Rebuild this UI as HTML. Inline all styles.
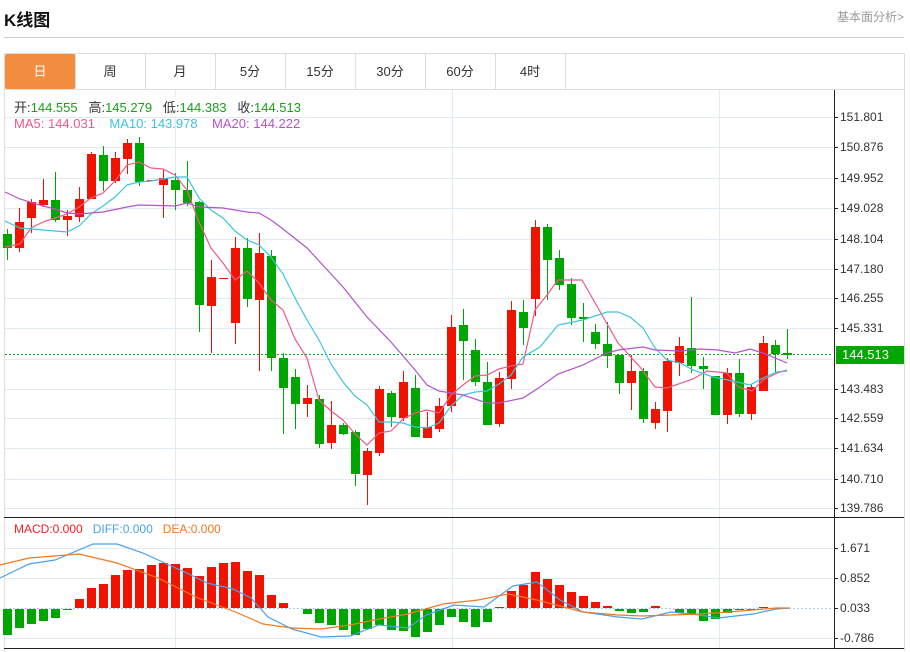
<!DOCTYPE html>
<html><head><meta charset="utf-8"><style>
body{margin:0;width:910px;height:652px;background:#fff;overflow:hidden;font-family:"Liberation Sans","Noto Sans CJK SC",sans-serif;position:relative}
.a{position:absolute;white-space:nowrap}
.tab{position:absolute;top:54px;height:35px;width:70px;line-height:35px;text-align:center;font-size:13px;color:#333;border-right:1px solid #ddd}
</style></head><body>
<div class="a" style="left:4px;top:6px;font-size:17px;font-weight:bold;color:#111">K线图</div>
<div class="a" style="right:6px;top:8px;font-size:12px;color:#999">基本面分析&gt;</div>
<div class="a" style="left:4px;top:37px;width:900px;height:1px;background:#ccc"></div>
<div class="a" style="left:4px;top:53px;width:899px;height:597px;border:1px solid #ddd;border-bottom:none"></div>
<div class="a" style="left:5px;top:89px;width:899px;height:1px;background:#ddd"></div>
<div class="tab" style="left:5px;background:#f28c3f;color:#fff;border-radius:2px">日</div>
<div class="tab" style="left:75px">周</div>
<div class="tab" style="left:145px">月</div>
<div class="tab" style="left:215px">5分</div>
<div class="tab" style="left:285px">15分</div>
<div class="tab" style="left:355px">30分</div>
<div class="tab" style="left:425px">60分</div>
<div class="tab" style="left:495px">4时</div>
<svg id="s" class="a" style="left:0;top:0" width="910" height="652" xmlns="http://www.w3.org/2000/svg" font-family="Liberation Sans, sans-serif" font-size="12"></svg>
<div class="a" style="left:14px;top:97px;font-size:13px;color:#333;background:#fff">开:<span style="color:#1a9e1a">144.555</span>&nbsp;&nbsp; 高:<span style="color:#1a9e1a">145.279</span>&nbsp;&nbsp; 低:<span style="color:#1a9e1a">144.383</span>&nbsp;&nbsp; 收:<span style="color:#1a9e1a">144.513</span></div>
<div class="a" style="left:14px;top:116px;font-size:13px"><span style="color:#ee5a8a">MA5: 144.031</span>&nbsp;&nbsp;&nbsp; <span style="color:#3cc4dc">MA10: 143.978</span>&nbsp;&nbsp;&nbsp; <span style="color:#b355c8">MA20: 144.222</span></div>
<div class="a" style="left:14px;top:522px;font-size:12px"><span style="color:#ee2222">MACD:0.000</span>&nbsp;&nbsp; <span style="color:#4aa0ee">DIFF:0.000</span>&nbsp;&nbsp; <span style="color:#f07820">DEA:0.000</span></div>
<div class="a" style="left:836px;top:346px;width:68px;height:18px;background:#00a800;color:#fff;font-size:13px;line-height:18px;padding-left:6px;box-sizing:border-box">144.513</div>
<script>
var s=document.getElementById('s'),h='';
function L(x1,y1,x2,y2,c,w,d){h+='<line x1="'+x1+'" y1="'+y1+'" x2="'+x2+'" y2="'+y2+'" stroke="'+c+'" stroke-width="'+(w||1)+'"'+(d?' stroke-dasharray="'+d+'"':'')+'/>';}
function R(x,y,w,hh,c){if(hh<1)hh=1;h+='<rect x="'+x+'" y="'+y+'" width="'+w+'" height="'+hh+'" fill="'+c+'"/>';}
var G='#e3ebf2';
var py=[117,147,178,208,239,269,298,328,359,389,418,448,479,508];
py.forEach(function(y){L(5,y+.5,833,y+.5,G);});
[548,578,638].forEach(function(y){L(5,y+.5,833,y+.5,G);});
[175,452,719].forEach(function(x){L(x+.5,90,x+.5,648,G);});
L(5,608.5,833,608.5,'#a8d0e8',1,'2,2');
L(5,354.5,833,354.5,'#1a9e1a',1,'2,2');
L(4,517.5,904,517.5,'#222');L(4,648.5,904,648.5,'#222');
L(834.5,90,834.5,648,'#222');
var lab=['151.801','150.876','149.952','149.028','148.104','147.180','146.255','145.331','','143.483','142.559','141.634','140.710','139.786'];
py.forEach(function(y,i){if(!lab[i])return;L(834,y+.5,838,y+.5,'#222');h+='<text x="840" y="'+(y+4)+'" fill="#333">'+lab[i]+'</text>';});
[[548,'1.671'],[578,'0.852'],[608,'0.033'],[638,'-0.786']].forEach(function(a){L(834,a[0]+.5,838,a[0]+.5,'#222');h+='<text x="840" y="'+(a[0]+4)+'" fill="#333">'+a[1]+'</text>';});
var RED='#f01400',GRN='#00a600';
// c: color, bodyTop, bodyBot, hi, lo
var C=[['g',234,248,229,260],['r',222,248,208,252],['r',202,218,199,233],['r',200,205,179,207],['g',200,220,172,222],['r',216,220,210,236],['r',199,217,187,222],['r',154,199,152,199],['g',155,181,146,191],['r',158,181,152,183],['r',143,159,139,174],['g',143,182,137,186],['r',180,181,180,181],['r',178,185,170,218],['g',180,190,173,210],['g',190,203,161,206],['g',202,305,201,332],['r',277,306,260,353],['r',278,279,278,279],['r',248,323,237,344],['g',248,299,238,307],['r',253,300,233,371],['g',256,358,250,371],['g',358,388,353,434],['g',377,404,369,429],['r',398,404,385,417],['g',399,444,395,448],['r',425,443,401,449],['g',425,434,423,435],['g',432,474,430,486],['r',451,475,448,505],['r',389,453,386,456],['g',393,417,391,427],['r',382,418,371,421],['g',388,437,375,437],['r',427,438,412,438],['r',406,429,398,432],['r',327,406,315,412],['g',325,341,309,380],['g',350,382,339,386],['g',382,425,362,425],['r',378,424,372,427],['r',310,379,301,389],['g',312,328,300,345],['r',227,299,220,316],['g',227,260,224,300],['g',258,285,250,290],['g',284,318,278,325],['g',317,319,303,342],['g',332,344,324,349],['g',344,356,322,368],['g',355,383,355,394],['r',371,383,355,410],['g',371,419,368,423],['r',409,423,402,429],['r',361,411,358,432],['r',346,363,337,376],['g',348,366,297,373],['g',366,369,357,389],['g',376,415,376,415],['r',373,415,368,424],['g',373,414,359,417],['r',387,414,384,420],['r',343,391,336,391],['g',345,354,340,372],['g',353,355,329,359]];
C.forEach(function(c,i){var x=7.5+12*i,col=c[0]=='r'?RED:GRN;L(x,c[3],x,c[4],col);R(x-4.5,c[1],9,c[2]-c[1],col);});
function P(pts,c){h+='<polyline fill="none" stroke="'+c+'" stroke-width="1.2" points="'+pts+'"/>';}
P('5,247 20,244 31,228 43,222 55,218 67,214 79,207 91,198 103,193 115,181 127,165 139,162 151,168 163,169 175,175 187,190 199,222 211,248 223,263 235,280 247,271 259,283 271,300 283,310 295,339 307,358 319,400 331,411 343,420 355,434 367,445 379,433 391,431 403,419 415,413 427,410 439,413 451,395 463,385 475,376 487,375 499,369 511,366 523,364 535,310 547,295 558,280 582,280 618,343 640,367 655,387 667,388 693,379 707,371 727,373 738,387 752,391 763,380 777,373 787,370','#ee5a8a');
P('5,221 20,228 43,230 55,231 67,232 79,226 91,214 103,206 115,197 127,185 139,182 151,181 163,179 175,177 187,177 199,198 211,210 223,218 235,231 247,240 259,245 271,257 283,274 295,298 307,320 319,340 331,364 343,382 355,396 367,405 379,422 391,422 403,423 415,427 427,428 439,423 451,406 463,395 475,392 487,391 499,384 511,375 523,357 540,347 558,325 583,320 607,312 618,312 630,317 643,328 655,348 667,360 680,363 693,370 713,377 737,382 750,385 763,378 777,372 787,371','#3cc4dc');
P('5,192 20,199 43,206 55,209 67,213 79,214 103,212 127,207 139,205 175,206 187,203 199,207 223,208 247,212 259,213 271,220 283,229 307,248 343,287 367,317 391,342 415,370 427,385 439,391 463,395 487,403 499,403 523,398 540,387 558,374 583,365 607,353 618,350 643,347 655,350 680,351 700,349 718,350 735,353 750,349 763,353 787,363','#b355c8');
var M=[635,628,624,621,618,610,599,588,584,575,570,569,565,563,564,568,576,567,563,562,571,575,595,603,608,614,623,625,630,635,629,625,630,631,637,632,625,617,622,627,622,607,591,585,572,579,585,592,596,602,606,611,613,612,606,608,613,615,621,619,613,610,609,607,608,608];
M.forEach(function(y,i){var x=7.5+12*i;if(y<608)R(x-4.5,y,9,608-y,RED);else if(y>608)R(x-4.5,609,9,y-609,GRN);});
P('0,578 29,564 55,560 93,544 117,544 143,553 169,565 187,573 207,583 233,589 251,598 268,617 292,629 321,637 350,636 379,625 408,628 426,615 454,605 484,607 513,586 537,582 560,600 583,612 618,617 642,619 671,612 700,615 718,618 753,614 776,609 790,608','#4aa0ee');
P('0,565 29,558 79,554 117,563 158,578 198,598 233,611 263,624 292,628 321,629 350,625 379,619 408,614 443,604 478,600 508,594 537,600 560,606 583,612 618,615 642,616 700,614 729,612 776,608 790,608','#f07820');
s.innerHTML=h;
</script>
</body></html>
